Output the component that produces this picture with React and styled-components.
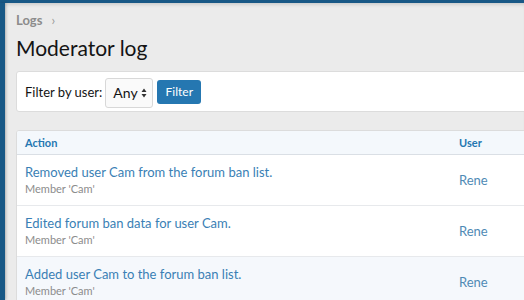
import React from "react";
import styled, { createGlobalStyle } from "styled-components";

const Global = createGlobalStyle`
  html, body { margin: 0; padding: 0; background: #ebebeb; overflow: hidden; }
  body { font-family: "Segoe UI", "Lato", "Noto Sans", sans-serif; }
  #root { width: 524px; height: 300px; overflow: hidden; }
`;

const Page = styled.div`
  display: flex;
  flex-direction: column;
  width: 524px;
  height: 300px;
  overflow: hidden;
  background: #ebebeb;
`;

const TopBar = styled.div`
  height: 3px;
  flex: none;
  background: #185886;
`;

const Body = styled.div`
  display: flex;
  flex: 1;
  min-height: 0;
`;

const Sidebar = styled.nav`
  width: 5px;
  flex: none;
  background: #185886;
  box-shadow: 1px 0 3px rgba(0, 0, 0, 0.25);
  position: relative;
  z-index: 1;
`;

const Main = styled.main`
  flex: 1;
  padding: 8px 0 0 11px;
  box-shadow: inset 0 4px 4px -3px rgba(0, 0, 0, 0.18);
  min-width: 0;
`;

const Crumbs = styled.div`
  display: flex;
  align-items: center;
  gap: 9px;
  height: 18px;
  font-size: 13px;
  font-weight: 700;
  color: #8c8c8c;
  padding-left: 0;
`;

const Chevron = styled.span`
  font-weight: 400;
  font-size: 13px;
  color: #9a9a9a;
`;

const Title = styled.h1`
  margin: 4px 0 8px;
  font-size: 21px;
  line-height: 30px;
  font-weight: 400;
  color: #141414;
`;

const Block = styled.div`
  width: 560px;
  background: #fff;
  border: 1px solid #dcdcdc;
  border-radius: 3px;
  box-sizing: border-box;
`;

const FilterBar = styled(Block)`
  display: flex;
  align-items: center;
  gap: 3px;
  height: 41px;
  padding: 0 8px;
`;

const Label = styled.span`
  font-size: 13px;
  color: #141414;
`;

const Select = styled.div`
  display: flex;
  align-items: center;
  justify-content: space-between;
  width: 48px;
  height: 30px;
  box-sizing: border-box;
  padding: 0 5px 0 7px;
  border: 1px solid #d8d8d8;
  border-radius: 3px;
  background: #fafafa;
  font-size: 14px;
  color: #141414;
  margin-top: 2px;
`;

const Button = styled.button`
  margin-left: 1px;
  height: 24px;
  width: 44px;
  border: none;
  border-radius: 3px;
  background: #2577b1;
  color: #fff;
  font-family: inherit;
  font-size: 12px;
  padding: 0;
`;

const Table = styled(Block)`
  margin-top: 18px;
  overflow: hidden;
`;

const Row = styled.div`
  display: grid;
  grid-template-columns: 1fr 124px;
  align-items: center;
  background: ${(p) => (p.$hl ? "#f5f8fc" : "#fff")};
  border-top: ${(p) => (p.$first ? "none" : "1px solid #e7e9ec")};
`;

const HeaderRow = styled(Row)`
  height: 23px;
  background: #f4f8fc;
  border-bottom: 1px solid #dadfe5;
  font-size: 11px;
  font-weight: 700;
  color: #2577b1;
`;

const Cell = styled.div`
  padding: 0 8px;
`;

const MainCell = styled(Cell)`
  padding: 8px 8px 8px;
  display: flex;
  flex-direction: column;
`;

const Action = styled.span`
  font-size: 13px;
  line-height: 18px;
  color: #3a7fb5;
`;

const Sub = styled.span`
  font-size: 11px;
  line-height: 16px;
  color: #8c8c8c;
`;

const UserCell = styled(Cell)`
  font-size: 13px;
  color: #4f8ab5;
`;

const rows = [
  { text: "Removed user Cam from the forum ban list.", sub: "Member 'Cam'" },
  { text: "Edited forum ban data for user Cam.", sub: "Member 'Cam'" },
  { text: "Added user Cam to the forum ban list.", sub: "Member 'Cam'", hl: true },
];

export default function App() {
  return (
    <Page>
      <Global />
      <TopBar />
      <Body>
        <Sidebar />
        <Main>
          <Crumbs>
            Logs <Chevron>›</Chevron>
          </Crumbs>
          <Title>Moderator log</Title>
          <FilterBar>
            <Label>Filter by user:</Label>
            <Select>
              Any
              <svg width="6" height="10" viewBox="0 0 6 10">
                <path d="M3 0.5 L5.5 4 H0.5 Z M3 9.5 L0.5 6 H5.5 Z" fill="#333" />
              </svg>
            </Select>
            <Button>Filter</Button>
          </FilterBar>
          <Table>
            <HeaderRow $first>
              <Cell>Action</Cell>
              <Cell>User</Cell>
            </HeaderRow>
            {rows.map((r, i) => (
              <Row key={i} $first={i === 0} $hl={r.hl}>
                <MainCell>
                  <Action>{r.text}</Action>
                  <Sub>{r.sub}</Sub>
                </MainCell>
                <UserCell>Rene</UserCell>
              </Row>
            ))}
          </Table>
        </Main>
      </Body>
    </Page>
  );
}
